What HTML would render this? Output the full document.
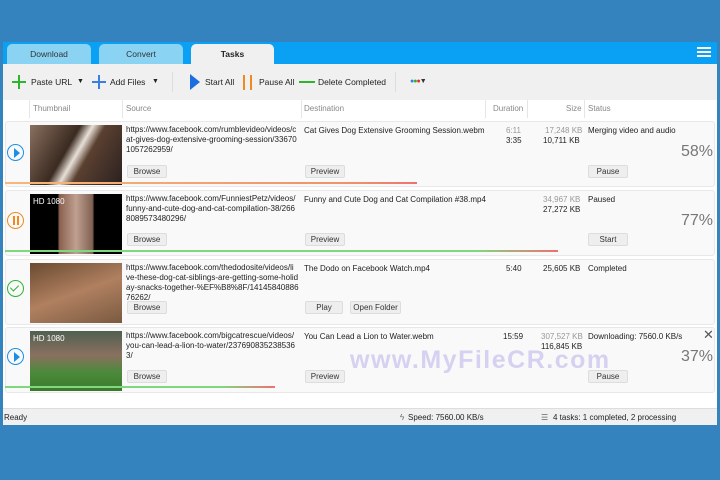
<!DOCTYPE html>
<html><head><meta charset="utf-8"><style>
*{margin:0;padding:0;box-sizing:border-box}
body{width:720px;height:480px;background:#3482be;position:relative;overflow:hidden;font-family:"Liberation Sans",sans-serif;font-size:8px;color:#222}
.a{position:absolute}
#win{left:3px;top:42px;width:714px;height:383px;background:#fff}
#tabs{left:3px;top:42px;width:714px;height:35px;background:#0aa0f4}
.tab{position:absolute;top:2px;height:33px;border-radius:5px 5px 0 0;background:#8ad3f3;text-align:center;line-height:20px;font-size:8.5px;color:#333}
.tb{position:absolute;top:76px;font-size:8.5px;color:#222;line-height:12px}
.hd{position:absolute;top:104px;color:#888;font-size:8px}
.vl{position:absolute;top:100px;width:1px;height:18px;background:#e6e6e6}
.card{position:absolute;left:5px;width:710px;height:66px;background:#f9f9f9;border:1px solid #e8e8e8;border-radius:3px}
.thumb{position:absolute;left:30px;width:92px;height:60px;background:#555}
.t{position:absolute;line-height:11px;font-size:8px}
.s{line-height:10px}
.btn{position:absolute;height:13px;background:#eee;border:1px solid #ddd;border-radius:2px;font-size:8px;text-align:center;line-height:11px;color:#333}
.pct{position:absolute;right:7px;font-size:16px;color:#777}
.g{color:#999}
.circ{position:absolute;left:7px;width:17px;height:17px;border-radius:50%;border:1.5px solid}
.bar{position:absolute;left:5px;height:2px}
#sb{left:3px;top:408px;width:714px;height:17px;background:#f0f0f0;border-top:1px solid #ddd}
</style></head><body>
<div class="a" id="win"></div>
<div class="a" id="tabs"></div>
<div class="tab" style="left:7px;top:44px;width:84px">Download</div>
<div class="tab" style="left:99px;top:44px;width:84px">Convert</div>
<div class="tab" style="left:191px;top:44px;width:83px;background:#f0f0f0;font-weight:bold;color:#222">Tasks</div>
<div class="a" style="left:697px;top:47px;width:14px;height:2px;background:#fff;box-shadow:0 4px 0 #fff,0 8px 0 #fff"></div>
<div class="a" style="left:3px;top:64px;width:714px;height:36px;background:#f0f0f0"></div>
<!-- toolbar -->
<div class="a" style="left:12px;top:81px;width:14px;height:2px;background:#2db52d"></div>
<div class="a" style="left:18px;top:75px;width:2px;height:14px;background:#2db52d"></div>
<div class="tb" style="left:31px">Paste URL</div>
<div class="tb" style="left:77px;font-size:7px">▼</div>
<div class="a" style="left:92px;top:81px;width:14px;height:2px;background:#3a7ee0"></div>
<div class="a" style="left:98px;top:75px;width:2px;height:14px;background:#3a7ee0"></div>
<div class="tb" style="left:110px">Add Files</div>
<div class="tb" style="left:152px;font-size:7px">▼</div>
<div class="a" style="left:172px;top:72px;width:1px;height:20px;background:#ddd"></div>
<div class="a" style="left:190px;top:74px;width:0;height:0;border-left:10px solid #1a6ee0;border-top:8px solid transparent;border-bottom:8px solid transparent"></div>
<div class="tb" style="left:205px">Start All</div>
<div class="a" style="left:243px;top:75px;width:2px;height:15px;background:#f08a20"></div>
<div class="a" style="left:250px;top:75px;width:2px;height:15px;background:#f08a20"></div>
<div class="tb" style="left:259px">Pause All</div>
<div class="a" style="left:299px;top:81px;width:16px;height:2px;background:#2db52d"></div>
<div class="tb" style="left:318px">Delete Completed</div>
<div class="a" style="left:395px;top:72px;width:1px;height:20px;background:#ddd"></div>
<div class="tb" style="left:410px;font-size:7px;letter-spacing:-1px"><span style="color:#3a7ee0">●</span><span style="color:#2db52d">●</span><span style="color:#e03030">●</span><span style="color:#333">▼</span></div>
<!-- header -->
<div class="a" style="left:3px;top:100px;width:714px;height:18px;background:#fff"></div>
<div class="vl" style="left:29px"></div><div class="vl" style="left:122px"></div><div class="vl" style="left:301px"></div><div class="vl" style="left:485px"></div><div class="vl" style="left:527px"></div><div class="vl" style="left:584px"></div>
<div class="hd" style="left:33px">Thumbnail</div><div class="hd" style="left:126px">Source</div><div class="hd" style="left:304px">Destination</div><div class="hd" style="left:493px">Duration</div><div class="hd" style="left:566px">Size</div><div class="hd" style="left:588px">Status</div>
<!-- row1 -->
<div class="card" style="top:121px"></div>
<div class="circ" style="top:144px;border-color:#1a8fe8"></div>
<div class="a" style="left:14px;top:148px;border-left:6px solid #1a8fe8;border-top:5px solid transparent;border-bottom:5px solid transparent"></div>
<div class="thumb" style="top:125px;background:linear-gradient(120deg,#8a7060,#3a2a20 40%,#e8e0d8 50%,#5a4030 60%,#2a2020)"></div>
<div class="t s" style="left:126px;top:125px;width:176px">https://www.facebook.com/rumblevideo/videos/c at-gives-dog-extensive-grooming-session/33670 1057262959/</div>
<div class="t" style="left:304px;top:125px">Cat Gives Dog Extensive Grooming Session.webm</div>
<div class="t g" style="left:506px;top:125px">6:11</div><div class="t" style="left:506px;top:135px">3:35</div>
<div class="t g" style="left:545px;top:125px">17,248 KB</div><div class="t" style="left:543px;top:135px">10,711 KB</div>
<div class="t" style="left:588px;top:125px">Merging video and audio</div>
<div class="pct" style="top:143px">58%</div>
<div class="btn" style="left:127px;top:165px;width:40px">Browse</div>
<div class="btn" style="left:305px;top:165px;width:40px">Preview</div>
<div class="btn" style="left:588px;top:165px;width:40px">Pause</div>
<div class="bar" style="top:182px;width:412px;background:linear-gradient(90deg,#f7b87a,#f0906a 85%,#f07070)"></div>
<!-- row2 -->
<div class="card" style="top:190px"></div>
<div class="circ" style="top:212px;border-color:#f08a20"></div>
<div class="a" style="left:13px;top:216px;width:1.5px;height:9px;background:#f08a20"></div><div class="a" style="left:17px;top:216px;width:1.5px;height:9px;background:#f08a20"></div>
<div class="thumb" style="top:194px;background:linear-gradient(90deg,#000 30%,#8a6050 32%,#c0a090 50%,#806050 68%,#000 70%)"></div>
<div class="t" style="left:33px;top:196px;color:#fff">HD 1080</div>
<div class="t s" style="left:126px;top:194px;width:176px">https://www.facebook.com/FunniestPetz/videos/ funny-and-cute-dog-and-cat-compilation-38/266 8089573480296/</div>
<div class="t" style="left:304px;top:194px">Funny and Cute Dog and Cat Compilation #38.mp4</div>
<div class="t g" style="left:543px;top:194px">34,967 KB</div><div class="t" style="left:543px;top:204px">27,272 KB</div>
<div class="t" style="left:588px;top:194px">Paused</div>
<div class="pct" style="top:212px">77%</div>
<div class="btn" style="left:127px;top:233px;width:40px">Browse</div>
<div class="btn" style="left:305px;top:233px;width:40px">Preview</div>
<div class="btn" style="left:588px;top:233px;width:40px">Start</div>
<div class="bar" style="top:250px;width:553px;background:linear-gradient(90deg,#7fd87f,#7fd87f 85%,#f07070)"></div>
<!-- row3 -->
<div class="card" style="top:259px"></div>
<div class="circ" style="top:280px;border-color:#2db52d"></div>
<div class="a" style="left:12px;top:283px;width:5px;height:8px;border-right:1.5px solid #2db52d;border-bottom:1.5px solid #2db52d;transform:rotate(45deg)"></div>
<div class="thumb" style="top:263px;background:linear-gradient(160deg,#6a4a30,#b08060 50%,#7a5a40)"></div>
<div class="t s" style="left:126px;top:263px;width:176px">https://www.facebook.com/thedodosite/videos/li ve-these-dog-cat-siblings-are-getting-some-holid ay-snacks-together-%EF%B8%8F/14145840886 76262/</div>
<div class="t" style="left:304px;top:263px">The Dodo on Facebook Watch.mp4</div>
<div class="t" style="left:506px;top:263px">5:40</div>
<div class="t" style="left:543px;top:263px">25,605 KB</div>
<div class="t" style="left:588px;top:263px">Completed</div>
<div class="btn" style="left:127px;top:301px;width:40px">Browse</div>
<div class="btn" style="left:305px;top:301px;width:38px">Play</div>
<div class="btn" style="left:350px;top:301px;width:51px">Open Folder</div>
<!-- row4 -->
<div class="card" style="top:327px"></div>
<div class="circ" style="top:348px;border-color:#1a8fe8"></div>
<div class="a" style="left:14px;top:352px;border-left:6px solid #1a8fe8;border-top:5px solid transparent;border-bottom:5px solid transparent"></div>
<div class="thumb" style="top:331px;background:linear-gradient(180deg,#506050,#8a7060 40%,#4a8a3a 70%,#3a7a2a)"></div>
<div class="t" style="left:33px;top:333px;color:#fff">HD 1080</div>
<div class="t s" style="left:126px;top:331px;width:176px">https://www.facebook.com/bigcatrescue/videos/ you-can-lead-a-lion-to-water/237690835238536 3/</div>
<div class="t" style="left:304px;top:331px">You Can Lead a Lion to Water.webm</div>
<div class="t" style="left:503px;top:331px">15:59</div>
<div class="t g" style="left:541px;top:331px">307,527 KB</div><div class="t" style="left:541px;top:341px">116,845 KB</div>
<div class="t" style="left:588px;top:331px">Downloading: 7560.0 KB/s</div>
<div class="a" style="left:703px;top:327px;font-size:13px;color:#555">✕</div>
<div class="pct" style="top:348px">37%</div>
<div class="a" style="left:350px;top:346px;font-size:25px;font-weight:bold;color:rgba(160,150,230,.4);letter-spacing:1.5px">www.MyFileCR.com</div>
<div class="btn" style="left:127px;top:370px;width:40px">Browse</div>
<div class="btn" style="left:305px;top:370px;width:40px">Preview</div>
<div class="btn" style="left:588px;top:370px;width:40px">Pause</div>
<div class="bar" style="top:386px;width:270px;background:linear-gradient(90deg,#7fd87f,#7fd87f 80%,#f07070)"></div>
<!-- status -->
<div class="a" id="sb"></div>
<div class="t" style="left:4px;top:412px">Ready</div>
<div class="t" style="left:400px;top:412px;color:#666">ϟ</div>
<div class="t" style="left:408px;top:412px">Speed: 7560.00 KB/s</div>
<div class="t" style="left:541px;top:412px;color:#666">☰</div>
<div class="t" style="left:553px;top:412px">4 tasks: 1 completed, 2 processing</div>
</body></html>
